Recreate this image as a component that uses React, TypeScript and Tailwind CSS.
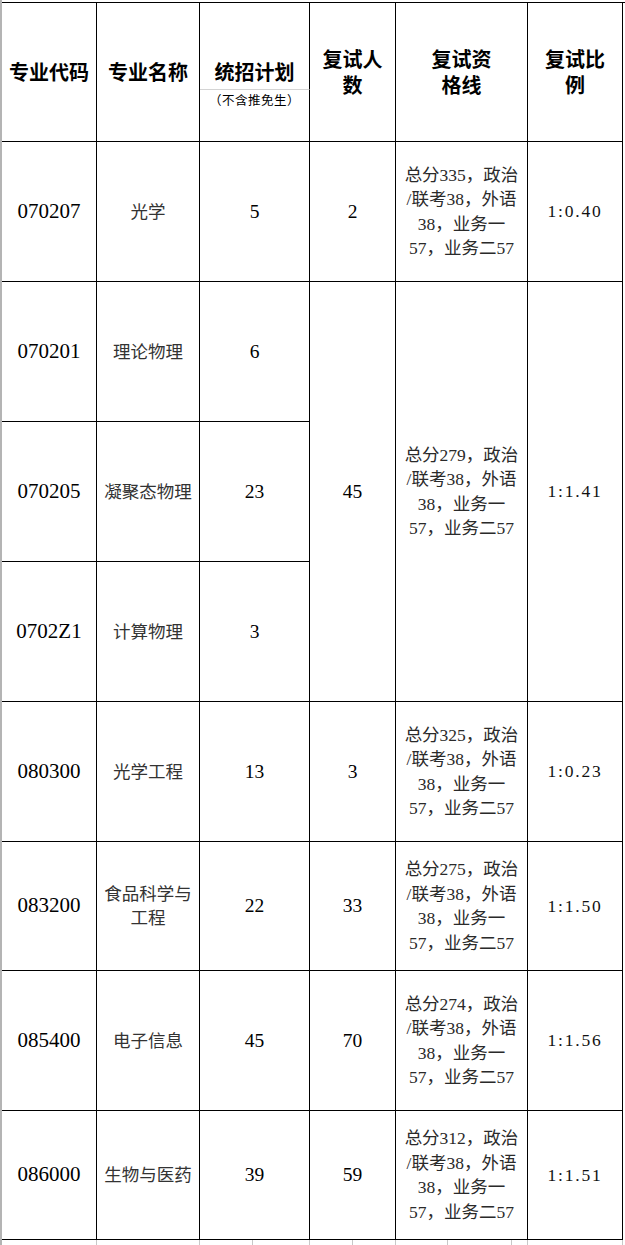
import React from "react";

const serif = "font-['Liberation_Serif','Noto_Sans_CJK_SC',serif]";
const sans = "font-['Noto_Sans_CJK_SC',sans-serif]";

type Row = {
  code: string;
  name: string[];
  plan: string;
  count?: string;
  line?: string[];
  ratio?: string;
  span?: boolean;
};

const lineFor = (total: string) => [
  `总分${total}，政治`,
  "/联考38，外语",
  "38，业务一",
  "57，业务二57",
];

const rows: Row[] = [
  { code: "070207", name: ["光学"], plan: "5", count: "2", line: lineFor("335"), ratio: "1:0.40" },
  { code: "070201", name: ["理论物理"], plan: "6", count: "45", line: lineFor("279"), ratio: "1:1.41", span: true },
  { code: "070205", name: ["凝聚态物理"], plan: "23" },
  { code: "0702Z1", name: ["计算物理"], plan: "3" },
  { code: "080300", name: ["光学工程"], plan: "13", count: "3", line: lineFor("325"), ratio: "1:0.23" },
  { code: "083200", name: ["食品科学与", "工程"], plan: "22", count: "33", line: lineFor("275"), ratio: "1:1.50" },
  { code: "085400", name: ["电子信息"], plan: "45", count: "70", line: lineFor("274"), ratio: "1:1.56" },
  { code: "086000", name: ["生物与医药"], plan: "39", count: "59", line: lineFor("312"), ratio: "1:1.51" },
];

const cell = "flex items-center justify-center text-center border-r border-b border-black";
const headCell = `${cell} row-span-2 text-[20px] font-bold text-black ${sans}`;

// gridline stubs of the sheet showing below the table
const ticks = [
  "w-[95px]",
  "w-[103px]",
  "w-[53px]",
  "w-[57px]",
  "w-[43px]",
  "w-[43px]",
  "w-[52px]",
  "w-[64px]",
  "w-[16px]",
  "w-[95px]",
];

const TwoLine = ({ a, b }: { a: string; b: string }) => (
  <div className="flex flex-col gap-[2px] leading-[24px]">
    <span>{a}</span>
    <span>{b}</span>
  </div>
);

export default function App() {
  return (
    <div className="w-[625px] h-[1245px] bg-white overflow-hidden border-l-2 border-[#b4b4b4]">
      <div className="grid grid-cols-[95px_103px_110px_86px_132px_95px] grid-rows-[87px_52px_140px_140px_140px_140px_140px_129px_140px_129px] border-t border-black mt-[2px]">
        {/* header */}
        <div className={headCell}>专业代码</div>
        <div className={headCell}>专业名称</div>
        <div
          className={`flex items-end justify-center pb-[2px] border-r border-b border-r-black border-b-[#d4d4d4] text-[20px] font-bold text-black ${sans}`}
        >
          统招计划
        </div>
        <div className={headCell}>
          <TwoLine a="复试人" b="数" />
        </div>
        <div className={headCell}>
          <TwoLine a="复试资" b="格线" />
        </div>
        <div className={headCell}>
          <TwoLine a="复试比" b="例" />
        </div>
        <div
          className={`flex items-start justify-center pt-[1px] border-r border-b border-black text-[12.5px] tracking-[0.5px] text-black ${sans}`}
        >
          （不含推免生）
        </div>

        {/* body */}
        {rows.map((r) => (
          <React.Fragment key={r.code}>
            <div className={`${cell} text-[21px] text-black ${serif}`}>{r.code}</div>
            <div className={`${cell} text-[17.5px] leading-[24px] text-[#333] ${serif}`}>
              <div>
                {r.name.map((n) => (
                  <div key={n} className="whitespace-nowrap">
                    {n}
                  </div>
                ))}
              </div>
            </div>
            <div className={`${cell} text-[19.5px] text-black ${serif}`}>{r.plan}</div>
            {r.count && (
              <>
                <div className={`${cell} text-[19.5px] text-black ${serif} ${r.span ? "row-span-3" : ""}`}>
                  {r.count}
                </div>
                <div
                  className={`${cell} text-[17.5px] leading-[24.5px] text-[#2a2a2a] ${serif} ${r.span ? "row-span-3" : ""}`}
                >
                  <div>
                    {r.line!.map((l) => (
                      <div key={l} className="whitespace-nowrap">
                        {l}
                      </div>
                    ))}
                  </div>
                </div>
                <div
                  className={`${cell} text-[17.5px] tracking-[1.8px] text-[#111] ${serif} ${r.span ? "row-span-3" : ""}`}
                >
                  {r.ratio}
                </div>
              </>
            )}
          </React.Fragment>
        ))}
      </div>

      <div className="flex h-[6px]">
        {ticks.map((w, i) => (
          <div key={i} className={`${w} h-full shrink-0 border-r border-[#c8c8c8]`} />
        ))}
      </div>
    </div>
  );
}
